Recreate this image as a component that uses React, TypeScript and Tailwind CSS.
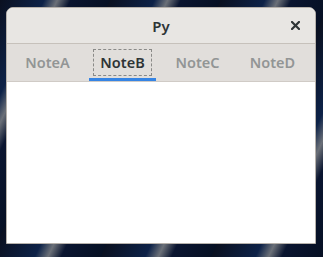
const tabs = ["NoteA", "NoteB", "NoteC", "NoteD"];
const activeTab = "NoteB";

export default function App() {
  return (
    <main className="h-[257px] w-[323px] overflow-hidden bg-[#081226] bg-[repeating-linear-gradient(115deg,#0a1020_0px,#0d2248_40px,#6b7078_52px,#0a1530_64px,#061024_100px)] pl-[6px] pt-[7px] font-['Noto_Sans',sans-serif]">
      <div className="flex h-[237px] w-[310px] flex-col overflow-hidden rounded-t-[7px] border border-[#b6b1ab] bg-white">
        <header className="flex h-[36px] shrink-0 items-center border-b border-[#c6c1bb] bg-[#e8e6e3] pl-[28px] pr-[12px]">
          <h1 className="flex-1 pt-[1px] text-center text-[15px] font-semibold leading-none text-[#2e3436]">
            Py
          </h1>
          <button type="button" className="grid h-[16px] w-[16px] place-items-center text-[#2e3436]">
            <svg width="9" height="9" viewBox="0 0 9 9">
              <path d="M1 1 L8 8 M8 1 L1 8" stroke="currentColor" strokeWidth="2.2" strokeLinecap="square" />
            </svg>
          </button>
        </header>

        <nav className="flex h-[38px] shrink-0 gap-[8px] border-b border-[#d0cbc6] bg-[#e1dedb] px-[7px]">
          {tabs.map((tab) => (
            <div
              key={tab}
              className={`flex w-[67px] items-end ${
                tab === activeTab ? "border-b-[3px] border-[#3584e4]" : "border-b-[3px] border-transparent"
              }`}
            >
              <div
                className={`mx-[4px] mb-[2px] flex h-[27px] flex-1 items-center justify-center text-[14.5px] font-semibold ${
                  tab === activeTab
                    ? "border border-dashed border-[#8a8a88] text-[#2e3436]"
                    : "text-[#929595]"
                }`}
              >
                {tab}
              </div>
            </div>
          ))}
        </nav>

        <section className="flex-1 bg-white" />
      </div>
    </main>
  );
}
